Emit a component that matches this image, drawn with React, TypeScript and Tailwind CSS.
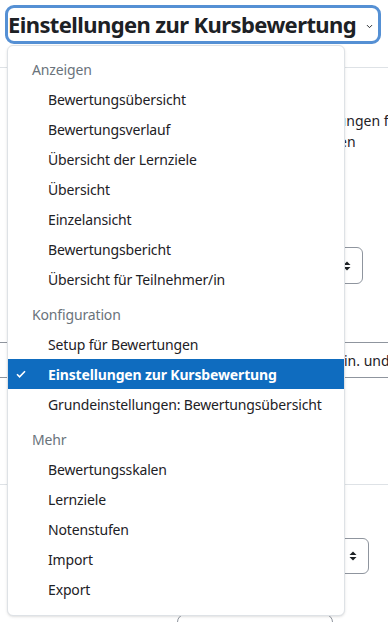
import { ChevronDown } from 'lucide-react'

const GRUPPEN = [
  {
    titel: 'Anzeigen',
    eintraege: [
      'Bewertungsübersicht',
      'Bewertungsverlauf',
      'Übersicht der Lernziele',
      'Übersicht',
      'Einzelansicht',
      'Bewertungsbericht',
      'Übersicht für Teilnehmer/in',
    ],
  },
  {
    titel: 'Konfiguration',
    eintraege: ['Setup für Bewertungen', 'Einstellungen zur Kursbewertung', 'Grundeinstellungen: Bewertungsübersicht'],
  },
  {
    titel: 'Mehr',
    eintraege: ['Bewertungsskalen', 'Lernziele', 'Notenstufen', 'Import', 'Export'],
  },
]

const AKTIV = 'Einstellungen zur Kursbewertung'

function SortIcon() {
  return (
    <svg width="8" height="10" viewBox="0 0 8 10" className="text-[#1d2125]">
      <path d="M4 0.5 L7.5 4 H0.5 Z" fill="currentColor" />
      <path d="M4 9.5 L7.5 6 H0.5 Z" fill="currentColor" />
    </svg>
  )
}

export default function App() {
  return (
    <div className="relative w-[388px] h-[622px] overflow-hidden bg-white text-[#1d2125] font-['Noto_Sans',sans-serif]">
      {/* Kopf mit Auswahl */}
      <div className="h-[68px] border-b border-[#dee2e6] pt-[5px] pl-[5px]">
        <div className="flex items-center w-[376px] h-[39px] rounded-[9px] border-[3px] border-[#5590d4] pr-[4px]">
          <span className="flex-1 text-[22px] font-bold tracking-[-0.6px] whitespace-nowrap">Einstellungen zur Kursbewertung</span>
          <ChevronDown className="mt-[4px] h-[9px] w-[9px] text-[#1d2125]" strokeWidth={2.5} />
        </div>
      </div>

      {/* Seiteninhalt hinter dem Menü */}
      <div className="pt-[42px] text-[14px] leading-[21px] whitespace-nowrap">
        <p className="pl-[40px]">Hier können Sie die allgemeinen Kurs-Einstellungen für die Bewertung</p>
        <p className="pl-[13px]">und die Anzeige der Bewertungen im Kurs festlegen</p>
      </div>
      <div className="flex justify-end pr-[25px] mt-[95px]">
        <div className="flex items-center justify-end w-[200px] h-[37px] rounded-md border border-[#8f959e] pr-[11px]">
          <SortIcon />
        </div>
      </div>
      <div className="mt-[58px] h-[36px] border-y border-[#8f959e] pl-[200px] flex items-center text-[14px] whitespace-nowrap">
        Nachkommastellen min. und max.
      </div>
      <div className="mt-[106px] border-t border-[#dee2e6]" />
      <div className="flex justify-end pr-[19px] mt-[53px]">
        <div className="flex items-center justify-end w-[200px] h-[36px] rounded-md border border-[#8f959e] pr-[11px]">
          <SortIcon />
        </div>
      </div>
      <div className="ml-[177px] mt-[40px] w-[156px] h-[20px] rounded-t-lg border border-[#8f959e]" />

      {/* Aufgeklapptes Menü */}
      <div className="absolute left-[7px] top-[45px] w-[338px] h-[571px] rounded-md border border-[#dee2e6] bg-white shadow-sm pt-[8px] text-[14px] tracking-[-0.15px]">
        {GRUPPEN.map((gruppe, i) => (
          <div key={gruppe.titel} className={i > 0 ? 'mt-[5px]' : ''}>
            <div className="h-[30px] flex items-center pl-[24px] text-[#6a737b]">{gruppe.titel}</div>
            {gruppe.eintraege.map((eintrag) =>
              eintrag === AKTIV ? (
                <div key={eintrag} className="relative h-[30px] flex items-center pl-[40px] bg-[#0f6cbf] text-white font-bold">
                  <svg className="absolute left-[8px] top-[11px]" width="10" height="8" viewBox="0 0 10 8">
                    <path d="M1 4.2 L3.6 6.8 L9 1.2" fill="none" stroke="white" strokeWidth="1.6" />
                  </svg>
                  {eintrag}
                </div>
              ) : (
                <div key={eintrag} className="h-[30px] flex items-center pl-[40px]">
                  {eintrag}
                </div>
              )
            )}
          </div>
        ))}
      </div>
    </div>
  )
}
